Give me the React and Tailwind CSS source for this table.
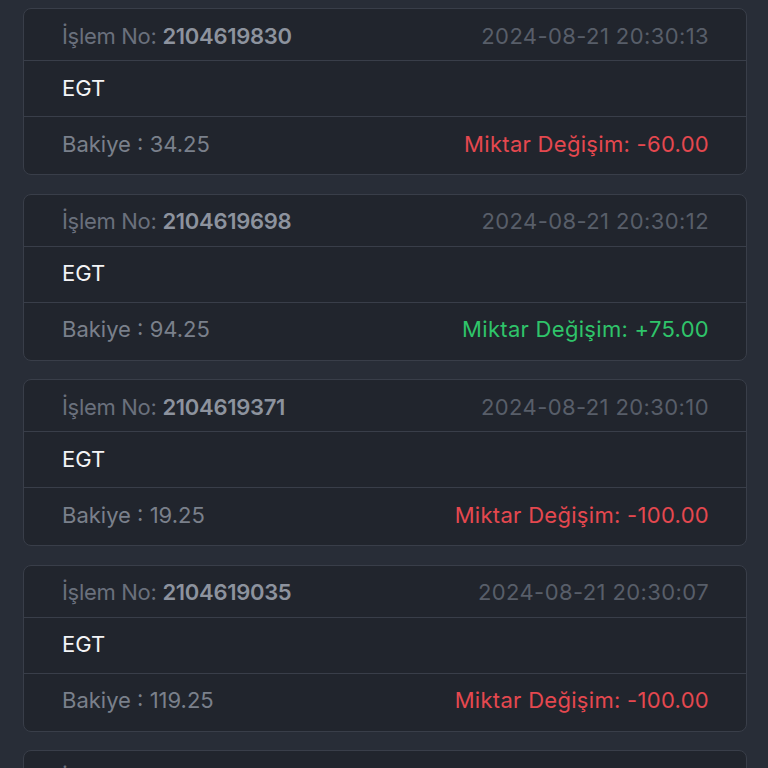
import React from "react";

const items = [
  { no: "2104619830", date: "2024-08-21 20:30:13", bal: "34.25", amt: "-60.00", pos: false },
  { no: "2104619698", date: "2024-08-21 20:30:12", bal: "94.25", amt: "+75.00", pos: true },
  { no: "2104619371", date: "2024-08-21 20:30:10", bal: "19.25", amt: "-100.00", pos: false },
  { no: "2104619035", date: "2024-08-21 20:30:07", bal: "119.25", amt: "-100.00", pos: false },
  { no: "2104618811", date: "2024-08-21 20:30:05", bal: "219.25", amt: "-100.00", pos: false },
];

export default function App() {
  return (
    <div
      className="w-[768px] h-[768px] overflow-hidden bg-[#282d37] pt-[8px] pl-[23px] pr-[21px]"
      style={{ fontFamily: "Inter, 'Noto Sans', sans-serif" }}
    >
      <div className="flex flex-col gap-[18.5px]">
        {items.map((it) => (
          <div
            key={it.no}
            className="rounded-[8px] border border-[#393e49] bg-[#21252d] text-[22px] leading-none"
          >
            <div className="h-[52px] flex items-center justify-between pl-[38px] pr-[37px] pt-[2px] border-b border-[#393e49]">
              <div className="text-[#6a707c] tracking-[-0.3px]">
                İşlem No: <span className="font-semibold text-[#8d939e]">{it.no}</span>
              </div>
              <div className="text-[#585e69] tracking-[0.4px]">{it.date}</div>
            </div>
            <div className="h-[56px] flex items-center pl-[38px] pb-[2px] border-b border-[#393e49] text-[#f3f4f6]">
              EGT
            </div>
            <div className="h-[57px] flex items-center justify-between pl-[38px] pr-[37px] pb-[4px]">
              <div className="text-[#7a808b]">Bakiye : {it.bal}</div>
              <div className={"tracking-[0.3px] " + (it.pos ? "text-[#2fc46a]" : "text-[#e5484f]")}>
                Miktar Değişim: {it.amt}
              </div>
            </div>
          </div>
        ))}
      </div>
    </div>
  );
}
